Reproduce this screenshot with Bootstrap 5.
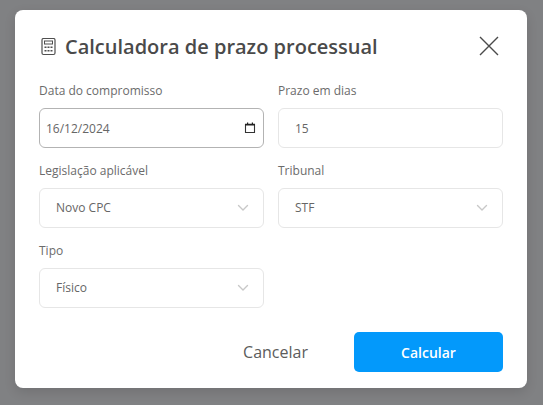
<!DOCTYPE html>
<html lang="pt-BR">
<head>
<meta charset="utf-8">
<title>Calculadora de prazo processual</title>
<link rel="stylesheet" href="https://cdn.jsdelivr.net/npm/bootstrap@5.3.0/dist/css/bootstrap.min.css">
<style>
html,body{height:405px;overflow:hidden}
body{background:#808183;font-family:"Open Sans",sans-serif;color:#4a4a4a;padding:10px 16px 17px 15px}
.calc-box{background:#fff;border-radius:8px;height:378px;padding:19px 24px 16px;box-shadow:0 4px 12px rgba(0,0,0,.12)}
.calc-head{height:35px;margin-bottom:19px}
.calc-title{font-size:20px;font-weight:600;color:#4a4a4a;margin:0;line-height:35px}
.calc-close{background:none;border:0;padding:0;width:20px;height:20px;line-height:0;margin-right:4px;margin-bottom:2px}
.calc-grid{--bs-gutter-x:14px;--bs-gutter-y:0}
.calc-label{font-size:12px;line-height:20px;color:#6b6b6b;display:block;height:16px;margin:-2px 0 11px}
.calc-field{height:40px;border:1px solid #e6e6e6;border-radius:6px;font-size:12px;color:#666;padding:0 16px;background-color:#fff;box-shadow:none}
.calc-date{border-color:#b3b3b3;padding:0 6px;background-repeat:no-repeat;background-position:right 6px center;background-size:14px 14px;background-image:url("data:image/svg+xml,%3csvg xmlns='http://www.w3.org/2000/svg' viewBox='0 0 14 14'%3e%3cpath fill='none' stroke='%23333' stroke-width='1.1' d='M2.5 3.5h9v8h-9z'/%3e%3cpath fill='%23222' d='M2 2.8h10v1.7H2zM4 1.5h1.2v1.5H4zM8.8 1.5h1.2v1.5H8.8z'/%3e%3c/svg%3e")}
select.calc-field{padding-left:16px;background-position:right 12px center;background-size:16px 16px;background-image:url("data:image/svg+xml,%3csvg xmlns='http://www.w3.org/2000/svg' viewBox='0 0 16 16'%3e%3cpath fill='none' stroke='%23c8c8c8' stroke-linecap='round' stroke-linejoin='round' stroke-width='1.4' d='m3.5 5.5 4.5 4.5 4.5-4.5'/%3e%3c/svg%3e")}
.calc-cell{margin-bottom:15px}
.calc-foot{margin-top:9px}
.calc-cancel{font-size:16px;color:#5c5c5c;background:none;border:0;width:125px;height:40px;padding:0;margin-right:16px}
.calc-go{width:149px;height:40px;background:#0399fb;border:0;border-radius:5px;color:#fff;font-size:14px;font-weight:600;padding:0}
</style>
</head>
<body>
<div class="calc-box">
  <div class="d-flex align-items-center justify-content-between calc-head">
    <div class="d-flex align-items-center gap-2">
      <svg width="18" height="18" viewBox="0 0 18 18" fill="none" aria-hidden="true"><rect x="3" y="0.5" width="13" height="16" rx="1.5" stroke="#4f4f4f" stroke-width="1.2"/><rect x="5.5" y="3" width="8" height="3" fill="none" stroke="#4f4f4f"/><g fill="#4f4f4f"><rect x="5.5" y="8.5" width="2" height="1.5"/><rect x="8.5" y="8.5" width="2" height="1.5"/><rect x="11.5" y="8.5" width="2" height="1.5"/><rect x="5.5" y="12" width="2" height="1.5"/><rect x="8.5" y="12" width="2" height="1.5"/><rect x="11.5" y="12" width="2" height="1.5"/></g></svg>
      <h1 class="calc-title">Calculadora de prazo processual</h1>
    </div>
    <button class="calc-close" type="button" aria-label="Fechar"><svg width="20" height="20" viewBox="0 0 20 20" fill="none"><path d="M1 1 19 19M19 1 1 19" stroke="#4a4a4a" stroke-width="1.4"/></svg></button>
  </div>
  <form>
    <div class="row calc-grid">
      <div class="col-6 calc-cell"><label class="calc-label" for="f1">Data do compromisso</label><input id="f1" type="text" class="form-control calc-field calc-date" value="16/12/2024"></div>
      <div class="col-6 calc-cell"><label class="calc-label" for="f2">Prazo em dias</label><input id="f2" type="text" class="form-control calc-field" value="15"></div>
      <div class="col-6 calc-cell"><label class="calc-label" for="f3">Legislação aplicável</label><select id="f3" class="form-select calc-field"><option>Novo CPC</option></select></div>
      <div class="col-6 calc-cell"><label class="calc-label" for="f4">Tribunal</label><select id="f4" class="form-select calc-field"><option>STF</option></select></div>
      <div class="col-6 calc-cell"><label class="calc-label" for="f5">Tipo</label><select id="f5" class="form-select calc-field"><option>Físico</option></select></div>
    </div>
    <div class="d-flex justify-content-end calc-foot">
      <button type="button" class="btn calc-cancel">Cancelar</button>
      <button type="button" class="btn calc-go">Calcular</button>
    </div>
  </form>
</div>
<script src="https://cdn.jsdelivr.net/npm/bootstrap@5.3.0/dist/js/bootstrap.bundle.min.js"></script>
</body>
</html>
